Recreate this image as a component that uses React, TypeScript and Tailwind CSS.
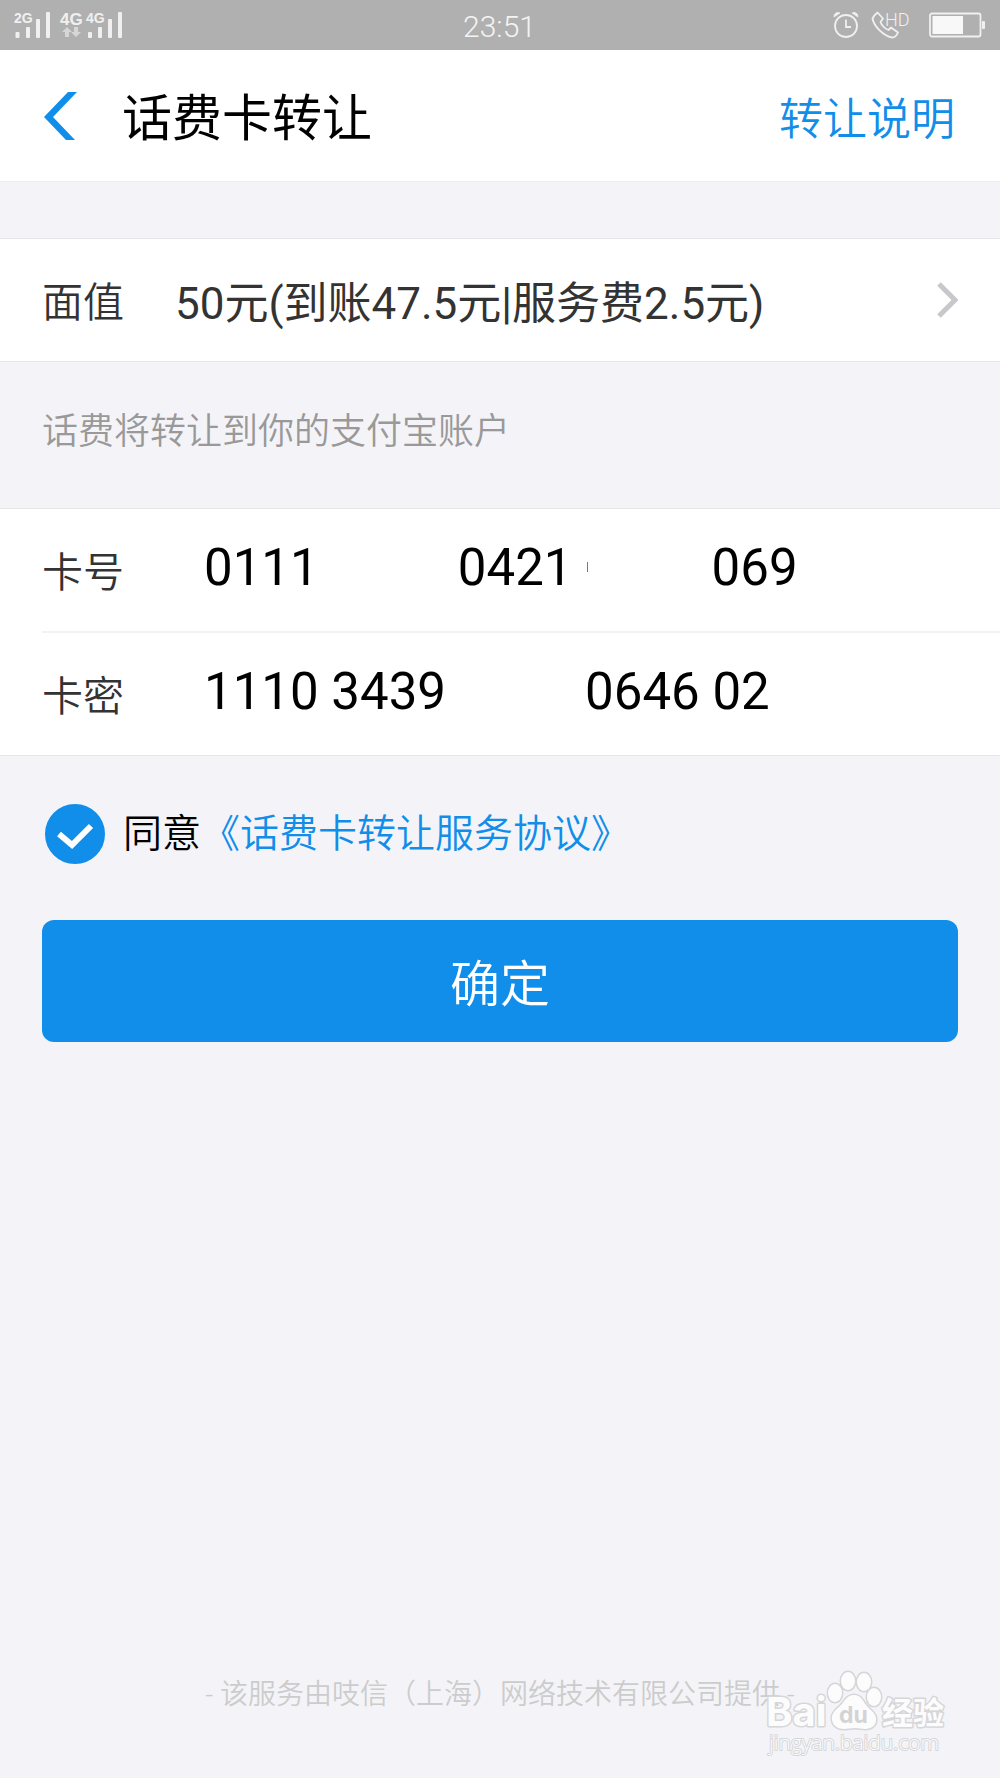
import { useState } from "react";

function SignalIcons() {
  return (
    <svg width="110" height="28" viewBox="0 0 110 28" fill="#f0f0f0" aria-label="signal">
      <g fontFamily="Liberation Sans, sans-serif" fontWeight="bold">
        <text x="0" y="12" fontSize="14">2G</text>
        <text x="46" y="14" fontSize="17">4G</text>
        <text x="72" y="12" fontSize="14">4G</text>
      </g>
      <g>
        <rect x="1.500" y="21" width="4" height="6" rx="1" />
        <rect x="12" y="16" width="4" height="11" rx="1" />
        <rect x="22" y="8" width="4" height="19" rx="1" />
        <rect x="32" y="1" width="4" height="26" rx="1" />
      </g>
      <g fill="#d6d6d6">
        <path d="M53 16l5 5h-3v5h-4v-5h-3z" />
        <path d="M62 26l-5-5h3v-5h4v5h3z" />
      </g>
      <g>
        <rect x="74" y="21" width="4" height="6" rx="1" />
        <rect x="84" y="16" width="4" height="11" rx="1" />
        <rect x="94" y="8" width="4" height="19" rx="1" />
        <rect x="104" y="1" width="4" height="26" rx="1" />
      </g>
    </svg>
  );
}

function AlarmIcon() {
  return (
    <svg width="26" height="28" viewBox="0 0 26 28" fill="none" stroke="#f0f0f0" strokeWidth="1.8">
      <circle cx="13" cy="15" r="11" />
      <path d="M13 8.500v7.500h5" />
      <path d="M1 6a4 4 0 0 1 6-4z M25 6a4 4 0 0 0-6-4z" fill="#f0f0f0" strokeWidth="0.800" />
    </svg>
  );
}

function CallHdIcon() {
  return (
    <svg width="40" height="32" viewBox="0 -2 40 32" fill="none" stroke="#f0f0f0" strokeWidth="1.8">
      <path
        strokeLinejoin="round"
        d="M6.500 1.500L12 7.500L9.500 11C10.500 14 14 18 17.500 19L20 16.500L27 21.500C26 24 23.500 26.500 21 26.500C12.500 25 3 15.500 1.500 7.500C2.500 5.500 4.500 3 6.500 1.500z"
      />
      <text x="14" y="15" fontFamily="Roboto, sans-serif" fontSize="18" fill="#f0f0f0" stroke="none">HD</text>
    </svg>
  );
}

function BatteryIcon() {
  return (
    <svg width="56" height="26" viewBox="0 0 56 26" fill="none" aria-label="battery">
      <rect x="1" y="1.500" width="50.500" height="23" rx="2" stroke="#f0f0f0" strokeWidth="1.8" />
      <rect x="3.500" y="4" width="30.500" height="18" fill="#f8f8f8" />
      <rect x="53" y="9" width="3" height="8" rx="1" fill="#f0f0f0" />
    </svg>
  );
}

function StatusBar() {
  return (
    <div className="grid h-[50px] grid-cols-3 items-center bg-[#b0b0b0] pr-[15px] pl-[14px] text-[#f4f4f4]">
      <SignalIcons />
      <span className="pt-1 text-center text-[30px] leading-[46px] font-light">23:51</span>
      <div className="flex items-center justify-end">
        <AlarmIcon />
        <div className="ml-3 flex items-center gap-[18px]">
          <CallHdIcon />
          <BatteryIcon />
        </div>
      </div>
    </div>
  );
}

function Field({ id, label, defaultValue }: { id: string; label: string; defaultValue: string }) {
  return (
    <div className="flex h-[122px] items-center">
      <label htmlFor={id} className="w-[162px] shrink-0 pt-2 text-[41px] text-[#333]">
        {label}
      </label>
      <input
        id={id}
        defaultValue={defaultValue}
        className="w-full min-w-0 bg-transparent pb-1 text-[51px] font-normal text-black outline-none"
      />
    </div>
  );
}

function Watermark() {
  return (
    <svg
      className="pointer-events-none absolute right-[46px] bottom-[18px]"
      width="190"
      height="94"
      viewBox="0 0 190 94"
      fill="#fcfcfd"
      stroke="#d6d6d9"
      strokeWidth="3"
      strokeLinejoin="round"
      style={{ paintOrder: "stroke" }}
    >
      <text x="2" y="60" fontFamily="Inter, sans-serif" fontWeight="bold" fontSize="40">Bai</text>
      {/* paw */}
      <ellipse cx="71" cy="27" rx="7" ry="9" />
      <ellipse cx="84" cy="15" rx="7" ry="9" />
      <ellipse cx="100" cy="16" rx="7" ry="9" />
      <ellipse cx="110" cy="31" rx="7" ry="9" />
      <path d="M90 29c-8 0-10 8-15 12c-5 4-8 8-7 13c1 6 6 9 12 9c4 0 7-1 11-1c4 0 7 1 10 1c7 0 12-4 11-11c-1-6-6-8-10-13c-3-4-5-10-12-10z" />
      <text x="75" y="57" fontFamily="Inter, sans-serif" fontWeight="bold" fontSize="23" fill="#d3d3d6" stroke="none">du</text>
      <text x="118" y="58" fontFamily="Noto Sans CJK SC, sans-serif" fontWeight="bold" fontSize="31">经验</text>
      <text x="5" y="84" fontFamily="Open Sans, sans-serif" fontSize="21" strokeWidth="2">jingyan.baidu.com</text>
    </svg>
  );
}

export default function App() {
  const [agreed, setAgreed] = useState(true);

  return (
    <div className="relative flex min-h-screen flex-col bg-[#f4f4f8] font-['Roboto','Noto_Sans_CJK_SC',sans-serif] font-[350]">
      <StatusBar />

      {/* Title bar */}
      <header className="flex h-[132px] items-center border-b border-[#eee] bg-white pr-[45px] pl-[43px]">
        <button aria-label="返回" className="mr-[45px]">
          <svg width="34" height="48" viewBox="0 0 34 48" fill="#108ee9">
            <path d="M25 0h9L10 25l22 23h-9L1 25z" />
          </svg>
        </button>
        <h1 className="pt-2 text-[50px] font-normal text-black">话费卡转让</h1>
        <a href="#help" className="ml-auto pt-2 text-[44px] text-[#108ee9]">转让说明</a>
      </header>

      <main>
        <button className="mt-14 flex h-[124px] w-full items-center border-y border-[#e6e6e6] bg-white px-[42px] text-left text-[#333]">
          <span className="w-[133px] shrink-0 pt-2 text-[41px]">面值</span>
          <span className="pt-2 text-[44px] font-normal">50元(到账47.5元|服务费2.5元)</span>
          <svg className="ml-auto" width="24" height="38" viewBox="0 0 24 38" fill="none" stroke="#c7c7cc" strokeWidth="5">
            <path d="M5 3l16 16L5 35" />
          </svg>
        </button>

        <p className="px-[42px] pt-[43px] pb-[49px] text-[36px] leading-[54px] text-[#999]">
          话费将转让到你的支付宝账户
        </p>

        <form className="border-y border-[#e6e6e6] bg-white pl-[42px]">
          <div className="relative border-b-2 border-[#f2f2f2]">
            <Field id="card-no" label="卡号" defaultValue="0111           0421           069" />
            <span className="absolute top-[53px] left-[545px] h-[10px] w-px bg-[#777]" />
          </div>
          <Field id="card-pwd" label="卡密" defaultValue="1110 3439           0646 02" />
        </form>

        <div className="mt-12 flex items-center px-[45px] text-[39px] leading-[60px]">
          <label className="flex items-center text-black">
            <span className="relative mr-[18px] size-[60px]">
              <input
                type="checkbox"
                checked={agreed}
                onChange={(e) => setAgreed(e.target.checked)}
                className="block size-[60px] appearance-none rounded-full border-2 border-[#108ee9] checked:bg-[#108ee9]"
              />
              {agreed && (
                <svg className="pointer-events-none absolute inset-0" viewBox="0 0 60 60" fill="none" stroke="#fff" strokeWidth="6">
                  <path d="M14 30l13 11L46 22" />
                </svg>
              )}
            </span>
            同意
          </label>
          <a href="#agreement" className="text-[#108ee9]">《话费卡转让服务协议》</a>
        </div>

        <div className="mt-14 px-[42px]">
          <button className="h-[122px] w-full rounded-xl bg-[#108ee9] pt-2 text-[50px] text-white">确定</button>
        </div>
      </main>

      <footer className="mt-auto pb-[62px] text-center text-[28px] leading-[42px] text-[#ccc]">
        - 该服务由吱信（上海）网络技术有限公司提供 -
      </footer>
      <Watermark />
    </div>
  );
}
